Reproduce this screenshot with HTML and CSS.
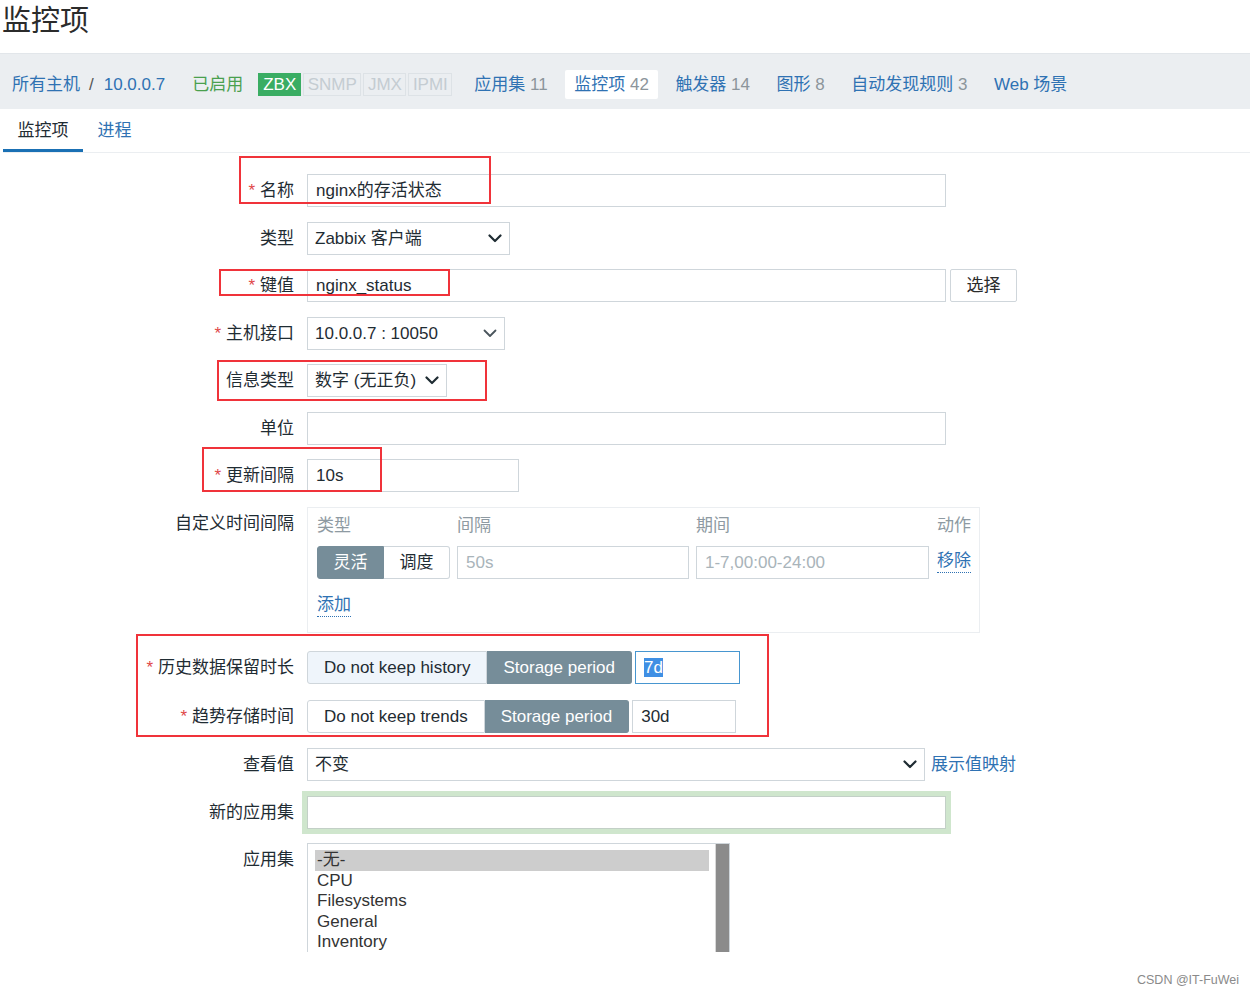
FILE: index.html
```html
<!DOCTYPE html>
<html lang="zh-CN">
<head>
<meta charset="utf-8">
<title>监控项</title>
<link rel="stylesheet" href="styles.css">
</head>
<body>
<div class="page">
  <h1 class="title">监控项</h1>

  <div class="nav">
    <a class="crumb">所有主机</a><span class="slash">/</span><a class="crumb">10.0.0.7</a>
    <span class="status">已启用</span>
    <span class="badges">
      <span class="badge on">ZBX</span><span class="badge">SNMP</span><span class="badge">JMX</span><span class="badge">IPMI</span>
    </span>
    <a class="nav-item first">应用集 <span class="cnt">11</span></a>
    <a class="nav-item active">监控项 <span class="cnt">42</span></a>
    <a class="nav-item">触发器 <span class="cnt">14</span></a>
    <a class="nav-item">图形 <span class="cnt">8</span></a>
    <a class="nav-item">自动发现规则 <span class="cnt">3</span></a>
    <a class="nav-item">Web 场景</a>
  </div>

  <div class="tabs">
    <span class="tab active">监控项</span>
    <span class="tab">进程</span>
  </div>

  <div class="form">
    <div class="lbl"><span class="req">*</span>名称</div>
    <div class="ctl"><div class="inp w-full">nginx的存活状态</div></div>

    <div class="lbl">类型</div>
    <div class="ctl"><div class="inp sel w-type"><span>Zabbix 客户端</span><svg class="chev" viewBox="0 0 14 9" width="14" height="9"><path d="M1.5 1.5 L7 7 L12.5 1.5" /></svg></div></div>

    <div class="lbl"><span class="req">*</span>键值</div>
    <div class="ctl"><div class="inp w-full">nginx_status</div><span class="btn">选择</span></div>

    <div class="lbl"><span class="req">*</span>主机接口</div>
    <div class="ctl"><div class="inp sel w-iface"><span>10.0.0.7 : 10050</span><svg class="chev light" viewBox="0 0 14 9" width="14" height="9"><path d="M1.5 1.5 L7 7 L12.5 1.5" /></svg></div></div>

    <div class="lbl">信息类型</div>
    <div class="ctl"><div class="inp sel w-info"><span>数字 (无正负)</span><svg class="chev" viewBox="0 0 14 9" width="14" height="9"><path d="M1.5 1.5 L7 7 L12.5 1.5" /></svg></div></div>

    <div class="lbl">单位</div>
    <div class="ctl"><div class="inp w-full"></div></div>

    <div class="lbl"><span class="req">*</span>更新间隔</div>
    <div class="ctl"><div class="inp w-delay">10s</div></div>

    <div class="lbl">自定义时间间隔</div>
    <div class="ctl">
      <div class="ci">
        <div class="ci-grid">
          <span class="ci-h">类型</span><span class="ci-h">间隔</span><span class="ci-h">期间</span><span class="ci-h right">动作</span>
          <div class="seg small"><span class="seg-b act">灵活</span><span class="seg-b">调度</span></div>
          <div class="inp ph">50s</div>
          <div class="inp ph">1-7,00:00-24:00</div>
          <a class="dlink">移除</a>
        </div>
        <a class="dlink add">添加</a>
      </div>
    </div>

    <div class="lbl mt"><span class="req">*</span>历史数据保留时长</div>
    <div class="ctl mt">
      <div class="seg"><span class="seg-b hover">Do not keep history</span><span class="seg-b act">Storage period</span></div>
      <div class="inp w-store focus"><span class="selt">7d</span></div>
    </div>

    <div class="lbl mt1"><span class="req">*</span>趋势存储时间</div>
    <div class="ctl mt1">
      <div class="seg"><span class="seg-b">Do not keep trends</span><span class="seg-b act">Storage period</span></div>
      <div class="inp w-store2">30d</div>
    </div>

    <div class="lbl mt1">查看值</div>
    <div class="ctl mt1"><div class="inp sel w-map"><span>不变</span><svg class="chev" viewBox="0 0 14 9" width="14" height="9"><path d="M1.5 1.5 L7 7 L12.5 1.5" /></svg></div><a class="link map">展示值映射</a></div>

    <div class="lbl">新的应用集</div>
    <div class="ctl"><div class="inp w-full glow"></div></div>

    <div class="lbl">应用集</div>
    <div class="ctl">
      <div class="listbox">
        <div class="opt selected">-无-</div>
        <div class="opt">CPU</div>
        <div class="opt">Filesystems</div>
        <div class="opt">General</div>
        <div class="opt">Inventory</div>
        <div class="scroll"></div>
      </div>
    </div>
  </div>

  <div class="mark m1"></div>
  <div class="mark m2"></div>
  <div class="mark m3"></div>
  <div class="mark m4"></div>
  <div class="mark m5"></div>
</div>
<div class="watermark">CSDN @IT-FuWei</div>
</body>
</html>
```
FILE: styles.css
```css
* { box-sizing: border-box; }
html, body { margin: 0; padding: 0; background: #fff; }
body {
  font-family: "Liberation Sans", Arial, "Noto Sans CJK SC", sans-serif;
  font-size: 17px;
  color: #1f2c33;
}
a { text-decoration: none; }

.page {
  width: 1250px;
  height: 952px;
  overflow: hidden;
  position: relative;
}

.title {
  margin: 0;
  height: 53px;
  padding-left: 2px;
  font-size: 29px;
  font-weight: normal;
  line-height: 42px;
  color: #2b2b2b;
}

/* navigation bar */
.nav {
  height: 56px;
  background: #ebeef1;
  border-top: 1px solid #e2e6ea;
  display: flex;
  align-items: center;
  padding: 6px 0 0 12px;
  white-space: nowrap;
  line-height: 29px;
}
.crumb { color: #2f72b3; }
.slash { color: #555; margin: 0 10px 0 9px; }
.status { color: #4aa04e; margin-left: 27px; }
.badges { display: flex; gap: 2px; margin-left: 15px; }
.badge {
  height: 23px;
  line-height: 21px;
  padding: 0 3.5px;
  border: 1px solid #dde2e6;
  color: #c4ccd2;
  font-size: 17px;
}
.badge.on { background: #3aad63; border-color: #3aad63; color: #fff; padding: 0 4px; }
.nav-item {
  padding: 0 9px;
  height: 29px;
  margin-right: 8.5px;
  color: #2f72b3;
  border-radius: 2px;
}
.nav-item.first { margin-left: 13px; }
.nav-item.active { background: #fff; }
.cnt { color: #8c959b; }

/* tabs */
.tabs {
  display: flex;
  height: 44px;
  margin-left: 3px;
  border-bottom: 1px solid #ebeef1;
}
.tab {
  padding: 0 14.5px;
  height: 43px;
  line-height: 43px;
  color: #2f72b3;
  border-bottom: 3px solid transparent;
}
.tab.active { color: #1f2c33; border-bottom-color: #1a70b4; }

/* form */
.form {
  display: grid;
  grid-template-columns: 294px 1fr;
  column-gap: 13px;
  row-gap: 14.5px;
  padding-top: 21px;
}
.lbl {
  text-align: right;
  height: 33px;
  line-height: 33px;
  white-space: nowrap;
  color: #1f2c33;
}
.req { color: #e04848; margin-right: 5px; }
.ctl { display: flex; align-items: flex-start; }
.mt { margin-top: 4px; }
.mt1 { margin-top: 1px; }

.inp {
  height: 33px;
  line-height: 31px;
  border: 1px solid #cfd6db;
  background: #fff;
  padding: 0 8px;
  color: #1f2c33;
  white-space: nowrap;
  overflow: hidden;
}
.inp.ph { color: #a9b4ba; }
.w-full { width: 639px; }
.w-type { width: 203px; }
.w-iface { width: 198px; }
.w-info { width: 140px; }
.w-delay { width: 212px; }
.w-map { width: 618px; }
.w-store { width: 105px; margin-left: 3px; }
.w-store2 { width: 104px; margin-left: 3px; }

.sel {
  display: flex;
  align-items: center;
  justify-content: space-between;
  padding: 0 7px 0 7px;
}
.chev { fill: none; stroke: #1f2c33; stroke-width: 2.2; stroke-linecap: round; stroke-linejoin: round; flex: none; }
.chev.light { stroke: #4a555c; stroke-width: 1.8; }

.btn {
  margin-left: 4px;
  width: 67px;
  height: 33px;
  line-height: 31px;
  text-align: center;
  border: 1px solid #cfd6db;
  border-radius: 2px;
  color: #2b2b2b;
  background: #fff;
}

/* custom intervals */
.ci {
  width: 673px;
  height: 126px;
  border: 1px solid #ebeef1;
  padding: 8px 8px 0 9px;
  background: #fff;
}
.ci-grid {
  display: grid;
  grid-template-columns: 133px 232px 233px auto;
  column-gap: 7px;
  row-gap: 10px;
}
.ci-h { color: #8e9aa2; line-height: 20px; }
.ci-h.right { text-align: right; }
.seg { display: flex; height: 33px; }
.seg-b {
  height: 33px;
  line-height: 31px;
  padding: 0 16px;
  border: 1px solid #cfd6db;
  background: #fff;
  color: #1f2c33;
  white-space: nowrap;
}
.seg-b:first-child { border-radius: 3px 0 0 3px; }
.seg-b:last-child { border-radius: 0 3px 3px 0; border-left: none; }
.seg-b.act { background: #768d99; border-color: #768d99; color: #fff; }
.seg-b.hover { background: #eff5fb; }
.seg.small .seg-b { text-align: center; }
.seg.small .seg-b:first-child { width: 67px; padding: 0; }
.seg.small .seg-b:last-child { width: 66px; padding: 0; }

.dlink {
  color: #2f72b3;
  border-bottom: 1px dotted #2f72b3;
  line-height: 20px;
  height: 22px;
  align-self: center;
  justify-self: end;
}
.dlink.add { display: inline-block; margin-top: 16px; }

.focus { border-color: #4796d0; }
.selt { background: #3f8fe4; color: #fff; }

.link { color: #2f72b3; line-height: 33px; }
.map { margin-left: 6px; }

.glow { box-shadow: 0 0 0 5px #cfe6cd; border-color: #c3d0c7; }

/* listbox */
.listbox {
  position: relative;
  width: 423px;
  height: 112px;
  border: 1px solid #cfd6db;
  border-bottom: none;
  padding: 6px 20px 0 7px;
  overflow: hidden;
}
.opt {
  height: 20.5px;
  line-height: 20.5px;
  padding-left: 2px;
  color: #333;
  white-space: nowrap;
}
.opt.selected { background: #cdcdcd; }
.scroll {
  position: absolute;
  top: 0;
  right: 0;
  width: 14px;
  height: 100%;
  background: #8b8b8b;
  border-left: 1px solid #d8d8d8;
}

/* red annotation boxes */
.mark {
  position: absolute;
  border: 2.5px solid #f0333a;
  pointer-events: none;
}
.m1 { left: 239px; top: 156px; width: 252px; height: 48px; }
.m2 { left: 219px; top: 269px; width: 231px; height: 27px; }
.m3 { left: 217px; top: 360px; width: 270px; height: 41px; }
.m4 { left: 202px; top: 447px; width: 180px; height: 45px; }
.m5 { left: 136px; top: 634px; width: 633px; height: 103px; }

.watermark {
  position: absolute;
  left: 1137px;
  top: 972px;
  font-size: 12.5px;
  line-height: 16px;
  color: #8a8a8a;
}
```
